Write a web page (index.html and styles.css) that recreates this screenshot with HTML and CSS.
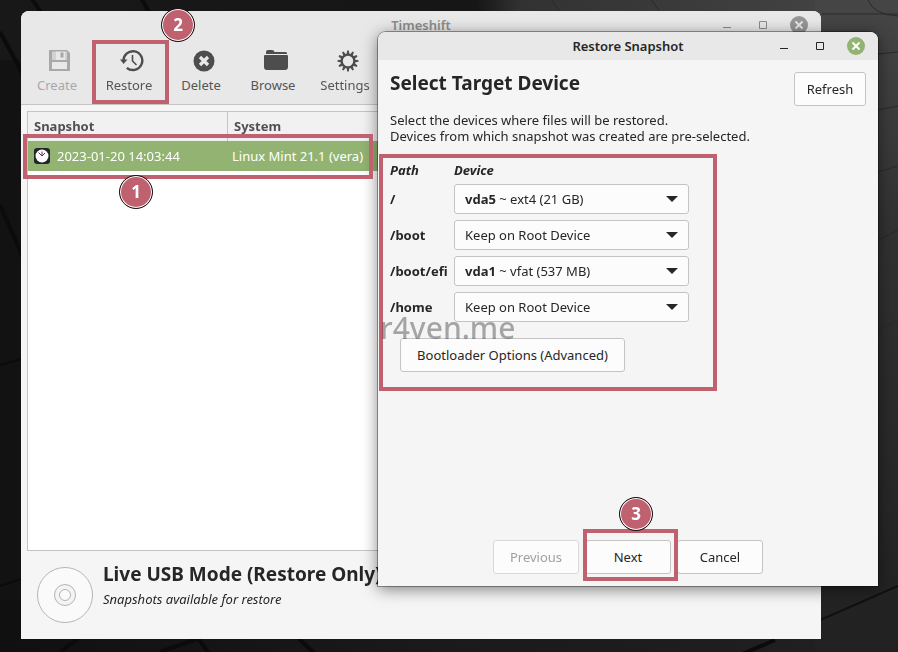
FILE: index.html
```html
<!DOCTYPE html>
<html lang="en">
<head>
<meta charset="utf-8">
<meta name="viewport" content="width=device-width, initial-scale=1">
<title>Timeshift</title>
<link rel="stylesheet" href="styles.css">
</head>
<body>
<svg class="wallpaper" viewBox="0 0 898 652" preserveAspectRatio="none" aria-hidden="true">
  <defs>
    <linearGradient id="top" x1="0" x2="1" y1="0" y2="0">
      <stop offset="0" stop-color="#181818"/><stop offset=".53" stop-color="#161616"/>
      <stop offset=".58" stop-color="#323232"/><stop offset="1" stop-color="#464646"/>
    </linearGradient>
    <linearGradient id="right" x1="0" x2="0" y1="0" y2="1">
      <stop offset="0" stop-color="#464646"/><stop offset=".35" stop-color="#323232"/>
      <stop offset="1" stop-color="#212121"/>
    </linearGradient>
    <linearGradient id="bottom" x1="0" x2="1" y1="0" y2="0">
      <stop offset="0" stop-color="#101010"/><stop offset=".5" stop-color="#1a1a1a"/>
      <stop offset="1" stop-color="#212121"/>
    </linearGradient>
  </defs>
  <rect width="898" height="652" fill="#121212"/>
  <rect width="898" height="60" fill="url(#top)"/>
  <rect y="600" width="898" height="52" fill="url(#bottom)"/>
  <rect x="815" width="83" height="652" fill="url(#right)"/>
  <g fill="none" stroke="#0b0b0b" stroke-width="4">
    <path d="M30-4 42 14M140-4 150 14M0 32 24 76M0 205 24 260M60 652 84 634M195 634 210 655M160 652 200 638M294 634 316 655M740 655 775 640"/>
    <path d="M0 365 21 359M0 586 21 579" stroke-width="2"/>
  </g>
  <g fill="none" stroke="#2a2a2a" stroke-width="1">
    <path d="M868 0Q874 15 898 16M822 14H898M878 54 898 52M878 110 898 106M878 172 898 166M878 240 898 230M878 330 898 320M878 415 898 400M878 510 898 503M550-2 560 12M650-2 660 12"/>
    <path d="M818 621 898 586" stroke="#111" stroke-width="2"/>
  </g>
</svg>

<main class="window app">
  <header class="titlebar inactive">
    <h1 class="title">Timeshift</h1>
    <div class="controls">
      <button class="control" aria-label="Minimize"><svg viewBox="0 0 18 18"><path d="M5 11.5h8" fill="none" stroke="currentColor"/></svg></button>
      <button class="control" aria-label="Maximize"><svg viewBox="0 0 18 18"><path d="M5.500 5.500h7v7h-7z" fill="none" stroke="currentColor"/></svg></button>
      <button class="control" aria-label="Close"><svg viewBox="0 0 18 18"><circle cx="9" cy="9" r="9" fill="#969696"/><path d="m5.500 5.500 7 7m0-7-7 7" fill="none" stroke="#e6e6e6" stroke-width="2"/></svg></button>
    </div>
  </header>

  <nav class="toolbar">
    <button class="tool" disabled>
      <svg viewBox="0 0 24 24"><path fill="currentColor" fill-rule="evenodd" d="M1 1h18l3 3v18H1zM4 2.500v8.500h15V2.500zM4 13v7h15v-7z"/><path fill="currentColor" d="M12.500 3.500h3v5h-3z"/><path fill="currentColor" d="M8 2v9H4V2zM19 2v9h-2V2z" opacity=".35"/></svg>
      <span>Create</span>
    </button>
    <div class="marked">
      <button class="tool">
        <svg viewBox="0 0 24 24"><path d="M3.500 12A9.400 9.400 0 1 1 6.800 18.800" fill="none" stroke="currentColor" stroke-width="2.400"/><path d="M0 10.500h7.500L3.600 15z" fill="currentColor"/><path d="M12.500 6V12l4 4" fill="none" stroke="currentColor" stroke-width="1.600"/></svg>
        <span>Restore</span>
      </button>
      <span class="frame frame-tool"><span class="badge">2</span></span>
    </div>
    <button class="tool">
      <svg viewBox="0 0 24 24"><circle cx="12" cy="12" r="10.500" fill="currentColor"/><path d="m8 8 8 8m0-8-8 8" fill="none" stroke="#e8e8e8" stroke-width="3.200"/></svg>
      <span>Delete</span>
    </button>
    <button class="tool">
      <svg viewBox="0 0 24 24"><path fill="currentColor" d="M2 4V3q0-2 2-2h4q2 0 2.500 2H21q2 0 2 1v1H2zM0 7q0-1 1-1h22q1 0 1 1v11q0 3-3 3H3q-3 0-3-3z"/></svg>
      <span>Browse</span>
    </button>
    <button class="tool">
      <svg viewBox="0 0 24 24"><circle cx="12" cy="12" r="6.400" fill="none" stroke="currentColor" stroke-width="2.400"/><g fill="currentColor"><g id="teeth"><path id="tooth" d="M10.400 6 11.200 1.500h1.600l.8 4.500zM10.400 18l.8 4.500h1.600l.8-4.500z"/><use href="#tooth" transform="rotate(90 12 12)"/></g><use href="#teeth" transform="rotate(30 12 12)"/><use href="#teeth" transform="rotate(60 12 12)"/></g></svg>
      <span>Settings</span>
    </button>
  </nav>

  <section class="list">
    <table class="snapshots">
      <colgroup><col class="col-name"><col></colgroup>
      <thead><tr><th scope="col">Snapshot</th><th scope="col">System</th></tr></thead>
      <tbody>
        <tr>
          <td>
            <div class="snapshot">
              <svg class="clock" viewBox="0 0 16 16"><rect width="16" height="16" rx="3" fill="#20272a"/><circle cx="8" cy="8" r="6.500" fill="#fff"/><path d="M8 8 4.500 4.500M8 8 11 5M8 8V3.500" fill="none" stroke="#6c3044"/></svg>
              <span>2023-01-20 14:03:44</span>
            </div>
            <span class="frame frame-row"><span class="badge">1</span></span>
          </td>
          <td>Linux Mint 21.1 (vera)</td>
        </tr>
      </tbody>
    </table>
  </section>

  <footer class="status">
    <svg class="disc" viewBox="0 0 56 56"><g fill="#fafafa" stroke="#b4b4b4"><circle cx="28" cy="28" r="27.500"/><circle cx="28" cy="28" r="10.500" fill="#f4f4f4"/><circle cx="28" cy="28" r="5.500"/></g></svg>
    <div>
      <h2 class="heading">Live USB Mode (Restore Only)</h2>
      <p class="hint">Snapshots available for restore</p>
    </div>
  </footer>
</main>

<section class="window dialog" role="dialog" aria-labelledby="dialog-title">
  <header class="titlebar">
    <h2 class="title" id="dialog-title">Restore Snapshot</h2>
    <div class="controls">
      <button class="control" aria-label="Minimize"><svg viewBox="0 0 18 18"><path d="M5 11.500h8" fill="none" stroke="currentColor"/></svg></button>
      <button class="control" aria-label="Maximize"><svg viewBox="0 0 18 18"><path d="M5.500 5.500h7v7h-7z" fill="none" stroke="currentColor"/></svg></button>
      <button class="control" aria-label="Close"><svg viewBox="0 0 18 18"><circle cx="9" cy="9" r="9" fill="#92b372"/><path d="m5.500 5.500 7 7m0-7-7 7" fill="none" stroke="#fff" stroke-width="2"/></svg></button>
    </div>
  </header>

  <form class="content">
    <div class="top">
      <h3 class="heading">Select Target Device</h3>
      <button type="button" class="button">Refresh</button>
    </div>
    <p class="intro">Select the devices where files will be restored.<br>Devices from which snapshot was created are pre-selected.</p>

    <div class="targets">
      <span class="frame frame-targets"></span>
      <span class="watermark">r4ven.me</span>
      <div class="grid">
        <span class="column">Path</span><span class="column">Device</span>
        <label for="root">/</label>
        <div class="picker"><select id="root"><button><selectedcontent></selectedcontent></button><option selected><b>vda5</b> ~ ext4 (21 GB)</option></select></div>
        <label for="boot">/boot</label>
        <div class="picker"><select id="boot"><button><selectedcontent></selectedcontent></button><option selected>Keep on Root Device</option></select></div>
        <label for="efi">/boot/efi</label>
        <div class="picker"><select id="efi"><button><selectedcontent></selectedcontent></button><option selected><b>vda1</b> ~ vfat (537 MB)</option></select></div>
        <label for="home">/home</label>
        <div class="picker"><select id="home"><button><selectedcontent></selectedcontent></button><option selected>Keep on Root Device</option></select></div>
      </div>
      <button type="button" class="button bootloader">Bootloader Options (Advanced)</button>
    </div>

    <div class="actions">
      <button type="button" class="button" disabled>Previous</button>
      <div class="marked">
        <button type="button" class="button">Next</button>
        <span class="frame frame-next"><span class="badge">3</span></span>
      </div>
      <button type="button" class="button">Cancel</button>
    </div>
  </form>
</section>
</body>
</html>
```
FILE: styles.css
```css
* {
  box-sizing: border-box;
}

:root {
  --ink: #262626;
  --muted: #4d4d4d;
  --surface: #f5f5f5;
  --bar: #e8e8e8;
  --line: #c4c4c4;
  --mark: #bf616f;
}

body {
  margin: 0;
  min-height: 100vh;
  overflow: hidden;
  background: #121212;
  color: var(--ink);
  font: 13px/16px "Noto Sans", sans-serif;
}

h1, h2, h3, p {
  margin: 0;
}

button, select {
  margin: 0;
  color: inherit;
  font: inherit;
}

.wallpaper {
  position: fixed;
  inset: 0;
  width: 100%;
  height: 100%;
}

/* Windows */
.window {
  position: absolute;
  display: flex;
  flex-direction: column;
  background: var(--surface);
  border-radius: 8px 8px 0 0;
}

.app {
  inset: 11px 77px 13px 21px;
}

.dialog {
  inset: 32px 20px 66px 378px;
  box-shadow: 0 0 0 1px rgb(0 0 0 / 35%), 0 3px 16px rgb(0 0 0 / 50%);
}

.titlebar {
  display: grid;
  grid-template-columns: 1fr auto 1fr;
  align-items: center;
  height: 28px;
  padding: 0 4px;
  background: var(--bar);
  border-radius: 8px 8px 0 0;
}

.title {
  grid-column: 2;
  font-size: 13px;
  font-weight: 600;
}

.inactive {
  color: #8c8c8c;
}

.controls {
  display: flex;
  justify-content: flex-end;
}

.control {
  display: flex;
  justify-content: center;
  width: 36px;
  padding: 0;
  border: 0;
  background: none;
}

.control svg {
  width: 18px;
  height: 18px;
}

/* Toolbar */
.toolbar {
  display: flex;
  padding: 8px 0;
  height: 66px;
  background: var(--bar);
  border-bottom: 1px solid var(--line);
}

.tool {
  display: flex;
  flex-direction: column;
  align-items: center;
  gap: 4px;
  width: 72px;
  padding: 2px 0;
  border: 0;
  background: none;
  color: #555;
}

.tool svg {
  width: 24px;
  height: 24px;
  margin-left: 6px;
  color: var(--muted);
}

.tool:disabled,
.tool:disabled svg {
  color: #a8a8a8;
}

.marked {
  position: relative;
}

/* Snapshot list */
.list {
  flex: 1;
  margin: 6px 6px 0;
  background: #fff;
  border: 1px solid var(--line);
}

.snapshots {
  width: 100%;
  border-collapse: separate;
  border-spacing: 0;
  table-layout: fixed;
}

.col-name {
  width: 199px;
}

.snapshots th {
  height: 29px;
  padding: 0 6px 2px;
  background: #f1f1f1;
  color: #505050;
  text-align: left;
}

.snapshots th + th {
  border-left: 1px solid var(--line);
}

.snapshots td {
  position: relative;
  height: 30px;
  padding: 0 5px;
  background: #92b372;
  color: #fff;
}

.snapshot {
  display: flex;
  align-items: center;
  gap: 7px;
  padding-left: 1px;
}

.clock {
  width: 16px;
  height: 16px;
}

/* Status bar */
.status {
  display: flex;
  gap: 10px;
  height: 88px;
  padding: 11px 16px;
}

.disc {
  width: 56px;
  height: 56px;
  margin-top: 5px;
}

.heading {
  font-size: 19px;
  font-weight: 700;
  line-height: 24px;
}

.hint {
  margin-top: 5px;
  font-style: italic;
}

/* Dialog */
.content {
  display: flex;
  flex: 1;
  flex-direction: column;
  padding: 12px;
}

.top {
  display: flex;
  justify-content: space-between;
}

.top .heading {
  line-height: 22px;
}

.button {
  min-width: 72px;
  height: 34px;
  padding: 0 11px;
  background: #fcfcfc;
  border: 1px solid var(--line);
  border-radius: 3px;
}

.button:disabled {
  color: #a0a0a0;
  border-color: #d8d8d8;
}

.intro {
  margin-top: 6px;
}

.targets {
  position: relative;
  margin-top: 18px;
}

.grid {
  display: grid;
  grid-template-columns: 64px 235px;
  align-items: center;
  row-gap: 6px;
}

.column {
  font-style: italic;
  font-weight: 700;
}

.grid label {
  font-weight: 700;
}

.picker {
  position: relative;
}

.picker::after {
  position: absolute;
  top: 12px;
  right: 11px;
  border: 6px solid transparent;
  border-top-color: var(--ink);
  border-bottom: 0;
  content: "";
  pointer-events: none;
}

.picker select {
  appearance: none;
  appearance: base-select;
  display: block;
  width: 100%;
  height: 30px;
  min-height: 0;
  padding: 6px 10px;
  background: #fcfcfc;
  border: 1px solid var(--line);
  border-radius: 3px;
}

.picker select::picker-icon {
  display: none;
}

.bootloader {
  position: relative;
  width: 225px;
  margin: 16px 0 0 10px;
}

.actions {
  display: flex;
  gap: 6px;
  justify-content: center;
  margin-top: auto;
}

.actions .button {
  width: 86px;
}

.watermark {
  position: absolute;
  z-index: 2;
  bottom: 28px;
  left: -10px;
  color: rgb(0 0 0 / 33%);
  font-size: 30px;
  font-weight: 500;
  line-height: 32px;
  pointer-events: none;
}

/* Step annotations */
.frame {
  position: absolute;
  z-index: 1;
  border: 4px solid var(--mark);
  pointer-events: none;
}

.frame-tool {
  inset: -7px -4px -8px -1px;
}

.frame-row {
  top: -7px;
  left: -5px;
  width: 350px;
  height: 45px;
}

.frame-targets {
  inset: -8px auto -19px -11px;
  width: 338px;
}

.frame-next {
  inset: -11px -7px -7px -2px;
}

.badge {
  position: absolute;
  display: grid;
  place-items: center;
  width: 34px;
  height: 34px;
  background: var(--mark);
  border: 1px solid #111;
  border-radius: 50%;
  box-shadow: inset 0 0 0 1px #fff;
  color: #fff;
  font: 700 17px/20px "Noto Sans", sans-serif;
}

.frame-tool .badge {
  top: -36px;
  right: -30px;
}

.frame-row .badge {
  bottom: -34px;
  left: 92px;
}

.frame-next .badge {
  top: -36px;
  left: 32px;
}
```
